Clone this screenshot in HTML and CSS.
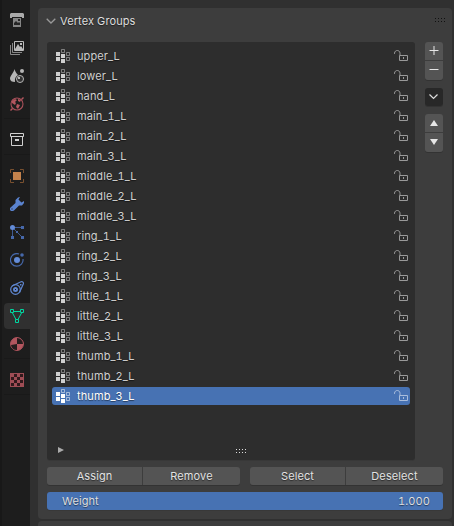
FILE: index.html
```
<!DOCTYPE html>
<html lang="en">
<head>
<meta charset="utf-8">
<title>Vertex Groups</title>
<link rel="stylesheet" href="styles.css">
</head>
<body>
<svg width="0" height="0" class="defs">
  <symbol id="group" viewBox="0 0 14 14">
    <path fill="currentColor" d="M0 3h4v4H0zM0 8h4v4H0zM5 5h4v4H5zM5 10h4v4H5z"/>
    <path class="dim" fill="none" stroke="currentColor" d="M5.500.5h3v3h-3zM10.500 3.500h3v3h-3zM10.500 8.500h3v3h-3z"/>
  </symbol>
  <symbol id="lock" viewBox="0 0 15 12">
    <path fill="none" stroke="currentColor" d="M5.500 5.500h8v5h-8zM.5 4V3.200C.7 1.300 2 .5 3.300.5S6 1.500 6 3.200V5.500"/>
    <path fill="currentColor" d="M9 7h1v2H9z"/>
  </symbol>
</svg>
<div class="app">
  <nav class="tabs">
    <div class="set">
      <div class="tab"><svg viewBox="0 0 14 14"><path fill="#aaa" d="M1 0h12l1 1v4h-2V4H2v1H0V1z"/><path fill="#858585" d="M3 5h8v9H3z"/><path fill="#252525" d="M4 12V10l2-2 2 2 1-1 1 1v2zM8 6h2v2H8z"/></svg></div>
      <div class="tab"><svg viewBox="0 0 14 14"><path fill="none" stroke="#888" d="M.5 4v9.500H10M2.500 2v9.500H12"/><path fill="none" stroke="#bbb" d="M4.500.5h9v9h-9z"/><path fill="#bbb" d="M5 8l3-5 2 3 1-1 2 3v1H5zM10 2h2v2h-2z"/></svg></div>
      <div class="tab"><svg viewBox="0 0 14 14"><path fill="#b5b5b5" d="M4.500 0C4 3 0 7 0 9.500 0 12 2 13 5 13 4.500 9 6 7 8 6 6 4 5 2 4.500 0z"/><circle cx="12" cy="2" r="2" fill="#b5b5b5"/><circle cx="10" cy="10" r="3.500" fill="#333" stroke="#b5b5b5"/><path fill="#b5b5b5" d="M8 8h2v2H8z"/></svg></div>
      <div class="tab"><svg viewBox="0 0 14 14"><circle cx="7" cy="7" r="6" fill="none" stroke="#a8505a" stroke-width="1.100"/><path fill="#b4565f" d="M2 4l3-2 2 1-2 2 1 1-1 2-3-2zM8 2l3 1-1 2-2-1zM7 7l3 1-1 2-1 2-2-2zM13 0l1 1-2 2-1-1zM0 13l2-2 1 1-2 2z"/></svg></div>
    </div>
    <div class="set">
      <div class="tab"><svg viewBox="0 0 14 14"><path fill="none" stroke="#d0d0d0" d="M.5.5h13v3H.5zM1.500 3.500v9h11v-9"/><path fill="#d0d0d0" d="M5 6h4v2H5z"/></svg></div>
    </div>
    <div class="set">
      <div class="tab"><svg viewBox="0 0 14 14"><path fill="#c4824c" d="M3 3h8v8H3z"/><path fill="none" stroke="#79502f" d="M.5 4V.5H4M10 .5h3.500V4M13.500 10v3.500H10M4 13.500H.5V10"/></svg></div>
      <div class="tab"><svg viewBox="0 0 14 14"><path fill="#5a83cf" d="M10 0L8.500 2.500 11.500 5.500 14 4V6l-2 2.500H9l-5 5-1 .5H1l-1-1v-2l5.500-5V3L8 .5z"/><path fill="#1d1d1d" d="M1.500 11.500h1v1h-1z"/></svg></div>
      <div class="tab"><svg viewBox="0 0 14 14"><path fill="none" stroke="#3f5a91" d="M3 2.500h10M2.500 3v10M3 3l10 10"/><circle cx="2.500" cy="2.500" r="2.500" fill="#638cd8"/><path fill="#4668aa" d="M11 1h3v3h-3zM1 11h3v3H1zM11 11h3v3h-3zM6 6h2v2H6z"/></svg></div>
      <div class="tab"><svg viewBox="0 0 14 14"><path fill="none" stroke="#4668aa" stroke-width="1.200" d="M9 1A6.300 6.300 0 1 0 13 6"/><circle cx="7" cy="7" r="3" fill="#638cd8"/><circle cx="12" cy="2" r="1.800" fill="#4668aa"/></svg></div>
      <div class="tab"><svg viewBox="0 0 14 14"><path fill="none" stroke="#5f86cf" stroke-width="1.200" d="M2 5L11 .8C12.500.3 13.800 1.500 13.300 3L9.500 11.500"/><circle cx="5.500" cy="8.500" r="4.800" fill="none" stroke="#5f86cf" stroke-width="1.200"/><circle cx="5.500" cy="8.500" r="2.500" fill="#5f86cf"/><path fill="#1d1d1d" d="M5 8h1v1H5z"/><path fill="#5f86cf" d="M10 3h1.500v1.500H10z"/></svg></div>
      <div class="tab active"><svg viewBox="0 0 14 14"><g fill="none" stroke="#00d5a0"><path d="M4 2.500h6M2.500 4L6 10.500M11.500 4L8 10.500"/><path d="M.5.5h3v3h-3zM10.500.5h3v3h-3zM5.500 10.500h3v3h-3z"/></g></svg></div>
      <div class="tab"><svg viewBox="0 0 14 14"><circle cx="7" cy="7" r="6.400" fill="#b4565f" stroke="#b4565f"/><path fill="#261d1e" d="M7 1a6 6 0 0 1 6 6H7zM7 7v6a6 6 0 0 1-6-5z"/></svg></div>
    </div>
    <div class="set">
      <div class="tab"><svg viewBox="0 0 14 14"><path fill="#9f4d55" d="M0 0h14v14H0z"/><path fill="#32191c" d="M4 1h3v3H4zM10 1h3v3h-3zM1 4h3v3H1zM7 4h3v3H7zM4 7h3v3H4zM10 7h3v3h-3zM1 10h3v3H1zM7 10h3v3H7z"/></svg></div>
    </div>
  </nav>
  <main class="main">
    <section class="panel">
      <header class="head">
        <svg class="chev" width="10" height="6" viewBox="0 0 10 6"><path fill="none" stroke="#999" stroke-width="1.300" d="M.7.7L5 5 9.300.7"/></svg>
        <h1>Vertex Groups</h1>
        <span class="grip dark"></span>
      </header>
      <div class="content">
        <div class="list">
          <ul>
            <li><svg class="gi"><use href="#group"/></svg><span>upper_L</span><svg class="lk"><use href="#lock"/></svg></li>
            <li><svg class="gi"><use href="#group"/></svg><span>lower_L</span><svg class="lk"><use href="#lock"/></svg></li>
            <li><svg class="gi"><use href="#group"/></svg><span>hand_L</span><svg class="lk"><use href="#lock"/></svg></li>
            <li><svg class="gi"><use href="#group"/></svg><span>main_1_L</span><svg class="lk"><use href="#lock"/></svg></li>
            <li><svg class="gi"><use href="#group"/></svg><span>main_2_L</span><svg class="lk"><use href="#lock"/></svg></li>
            <li><svg class="gi"><use href="#group"/></svg><span>main_3_L</span><svg class="lk"><use href="#lock"/></svg></li>
            <li><svg class="gi"><use href="#group"/></svg><span>middle_1_L</span><svg class="lk"><use href="#lock"/></svg></li>
            <li><svg class="gi"><use href="#group"/></svg><span>middle_2_L</span><svg class="lk"><use href="#lock"/></svg></li>
            <li><svg class="gi"><use href="#group"/></svg><span>middle_3_L</span><svg class="lk"><use href="#lock"/></svg></li>
            <li><svg class="gi"><use href="#group"/></svg><span>ring_1_L</span><svg class="lk"><use href="#lock"/></svg></li>
            <li><svg class="gi"><use href="#group"/></svg><span>ring_2_L</span><svg class="lk"><use href="#lock"/></svg></li>
            <li><svg class="gi"><use href="#group"/></svg><span>ring_3_L</span><svg class="lk"><use href="#lock"/></svg></li>
            <li><svg class="gi"><use href="#group"/></svg><span>little_1_L</span><svg class="lk"><use href="#lock"/></svg></li>
            <li><svg class="gi"><use href="#group"/></svg><span>little_2_L</span><svg class="lk"><use href="#lock"/></svg></li>
            <li><svg class="gi"><use href="#group"/></svg><span>little_3_L</span><svg class="lk"><use href="#lock"/></svg></li>
            <li><svg class="gi"><use href="#group"/></svg><span>thumb_1_L</span><svg class="lk"><use href="#lock"/></svg></li>
            <li><svg class="gi"><use href="#group"/></svg><span>thumb_2_L</span><svg class="lk"><use href="#lock"/></svg></li>
            <li class="sel"><svg class="gi"><use href="#group"/></svg><span>thumb_3_L</span><svg class="lk"><use href="#lock"/></svg></li>
          </ul>
          <div class="foot">
            <svg width="6" height="6" viewBox="0 0 6 6"><path fill="#aaa" d="M0 0l6 3-6 3z"/></svg>
            <span class="grip"></span>
          </div>
        </div>
        <div class="tools">
          <div class="stack">
            <button><svg width="10" height="10" viewBox="0 0 10 10"><path fill="none" stroke="#e6e6e6" d="M.5 4.500h9M5 0v9"/></svg></button>
            <button><svg width="10" height="10" viewBox="0 0 10 10"><path fill="none" stroke="#e6e6e6" d="M.5 4.500h9"/></svg></button>
          </div>
          <div class="stack"><button class="menu"><svg width="10" height="6" viewBox="0 0 10 6"><path fill="none" stroke="#ddd" stroke-width="1.200" d="M.5.5l4 4 4-4"/></svg></button></div>
          <div class="stack">
            <button><svg width="8" height="6" viewBox="0 0 8 6"><path fill="#e6e6e6" d="M4 0l4 6H0z"/></svg></button>
            <button><svg width="8" height="6" viewBox="0 0 8 6"><path fill="#e6e6e6" d="M0 0h8L4 6z"/></svg></button>
          </div>
        </div>
      </div>
      <div class="actions">
        <div class="pair"><button>Assign</button><button>Remove</button></div>
        <div class="pair"><button>Select</button><button>Deselect</button></div>
      </div>
      <div class="weight"><span>Weight</span><span>1.000</span></div>
    </section>
    <section class="panel next"></section>
  </main>
</div>
</body>
</html>
```
FILE: styles.css
```
* { box-sizing: border-box; }
body {
  margin: 0;
  background: #303030;
  color: #dedede;
  font: 11px/18px Inter, "Liberation Sans", sans-serif;
  font-variant-numeric: tabular-nums;
  letter-spacing: 0.1px;
  text-shadow: 0 1px 1px rgba(0, 0, 0, 0.5);
  overflow: hidden;
}
svg { display: block; flex: none; }
.defs { display: none; }
.app { display: flex; height: 526px; }
.tabs {
  width: 30px;
  padding: 6px 0 0 2px;
  background: #1d1d1d;
  border-left: 2px solid #181818;
  display: flex;
  flex-direction: column;
  gap: 8px;
}
.set { display: flex; flex-direction: column; gap: 2px; padding: 1px 0; box-shadow: 0 1px #191919; }
.tab {
  height: 26px;
  padding: 6px;
  border-radius: 4px 0 0 4px;
}
.tab svg { width: 14px; height: 14px; }
.active { background: #303030; }
.main { flex: 1; padding: 8px 2px 0 8px; }
.panel {
  height: 511px;
  padding: 0 9px;
  background: #3d3d3d;
  border-radius: 4px;
}
.next { height: 20px; margin-top: 2px; }
.head { height: 34px; display: flex; align-items: center; padding: 0 0 8px; }
h1 { margin: 0 auto 0 4px; font-size: 11px; font-weight: 400; }
.chev { margin-left: -1px; }
.grip {
  width: 11px;
  height: 4px;
  background: conic-gradient(from 270deg at 1px 1px, #ddd 90deg, transparent 0) 0 0 / 3px 3px;
}
.grip.dark { margin: -2px -3px 0 0; height: 5px; background-image: conic-gradient(from 270deg at 1px 1px, #101010 90deg, transparent 0); }
.content { display: flex; justify-content: space-between; }
.list {
  width: 368px;
  height: 418px;
  padding: 5px;
  background: #2d2d2d;
  border-radius: 3px;
  box-shadow: 0 1px #383838;
}
ul { margin: 0; padding: 0; list-style: none; }
li {
  display: flex;
  align-items: center;
  height: 18px;
  margin-bottom: 2px;
  padding: 0 1px 0 4px;
  border-radius: 3px;
  color: #d0d0d0;
}
li span { margin: 0 auto 0 7px; }
.gi { width: 14px; height: 14px; }
.dim { opacity: 0.5; }
.lk { width: 15px; height: 12px; color: #999; }
.sel { background: #4772b3; color: #fff; }
.sel .lk { color: #a9bddc; }
.foot { display: flex; align-items: center; height: 6px; padding-left: 6px; margin-top: 42px; }
.foot .grip { margin: 2px 0 0 172px; }
.tools { width: 18px; display: flex; flex-direction: column; gap: 8px; }
.stack { display: flex; flex-direction: column; gap: 1px; border-radius: 3px; overflow: hidden; box-shadow: 0 1px #333; }
button {
  margin: 0;
  padding: 0;
  border: 0;
  height: 18px;
  display: flex;
  align-items: center;
  justify-content: center;
  background: #545454;
  color: #e2e2e2;
  font: inherit;
  letter-spacing: inherit;
  text-shadow: inherit;
}
.stack button:nth-child(2) { height: 19px; padding-bottom: 1px; }
.stack .menu { background: #282828; }
.actions { display: flex; gap: 10px; margin-top: 7px; }
.pair { flex: 1; display: flex; gap: 1px; border-radius: 3px; overflow: hidden; box-shadow: 0 1px #333; }
.pair button { flex: 1; }
.pair button:first-child { flex: 0 0 95px; }
.weight {
  display: flex;
  justify-content: space-between;
  height: 18px;
  margin-top: 7px;
  padding: 0 13px 0 15px;
  border-radius: 3px;
  background: #4772b3;
  box-shadow: 0 1px #383838;
}
```
